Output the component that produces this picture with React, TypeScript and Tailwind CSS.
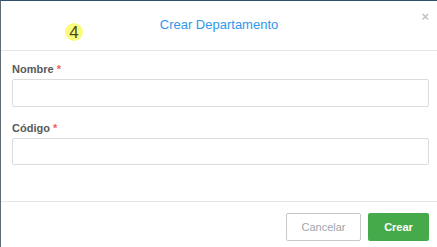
export default function App() {
  return (
    <div
      className="h-[247px] w-[437px] overflow-hidden border-t border-l border-t-[#2e4e6c] border-l-[#5f6a73] bg-white"
      style={{ fontFamily: '"Liberation Sans", Arial, sans-serif' }}
    >
      <div className="flex h-full flex-col">
        {/* Header */}
        <div className="relative flex h-[50px] shrink-0 items-center justify-center border-b border-[#e6e6e6]">
          <span className="mt-[-2px] text-[13px] text-[#2f97ec]">Crear Departamento</span>
          <span className="absolute left-[64px] top-[22px] flex h-[18px] w-[18px] items-center justify-center rounded-full bg-[#fbfb7c] text-[17px] leading-none text-[#4a4a20]">
            4
          </span>
          <span className="absolute right-[8px] top-[9px] text-[13px] font-bold leading-none text-[#c4c4c4]">
            ×
          </span>
        </div>

        {/* Body */}
        <div className="h-[150px] shrink-0 px-[11px] pt-[12px] pr-[8px]">
          <label className="block text-[11px] font-bold leading-[13px] text-[#595959]">
            Nombre <span className="text-[#f0625a]">*</span>
          </label>
          <div className="mt-[3px] h-[28px] rounded-[2px] border border-[#dcdcdc]"></div>

          <label className="mt-[15px] block text-[11px] font-bold leading-[13px] text-[#595959]">
            Código <span className="text-[#f0625a]">*</span>
          </label>
          <div className="mt-[3px] h-[27px] rounded-[2px] border border-[#dcdcdc]"></div>
        </div>

        {/* Footer */}
        <div className="flex flex-1 items-start justify-end gap-[7px] border-t border-[#e6e6e6] pt-[11px] pr-[8px]">
          <button className="h-[28px] w-[75px] rounded-[2px] border border-[#c8c8c8] bg-white text-[11px] text-[#a0a6ad]">
            Cancelar
          </button>
          <button className="h-[28px] w-[61px] rounded-[2px] bg-[#45ab4a] text-[11px] font-bold text-white">
            Crear
          </button>
        </div>
      </div>
    </div>
  );
}
